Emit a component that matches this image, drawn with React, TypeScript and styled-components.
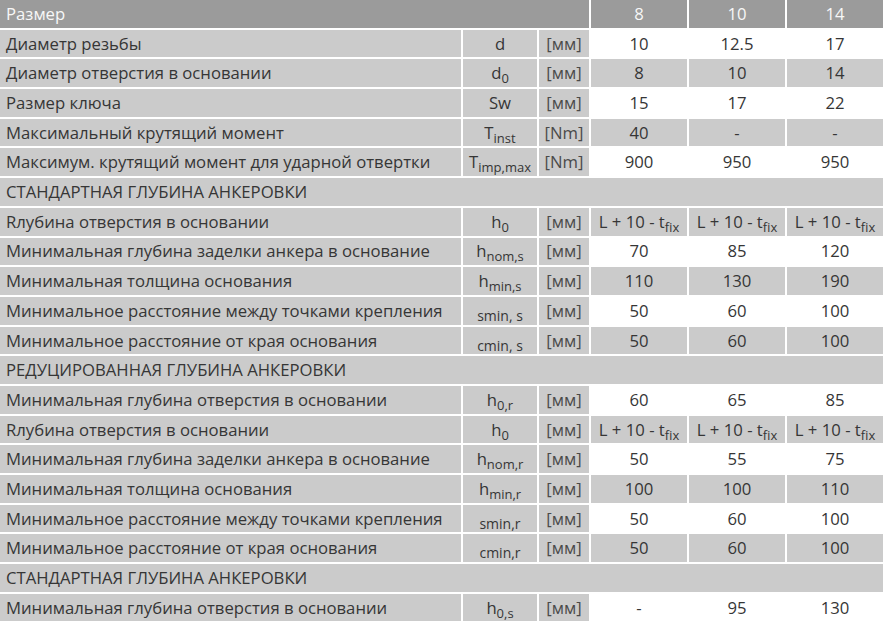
import React from 'react';
import styled, { createGlobalStyle } from 'styled-components';

const GlobalStyle = createGlobalStyle`
    html, body {
        margin: 0;
        padding: 0;
        background: #ffffff;
    }
    body {
        font-family: "Open Sans", "Liberation Sans", sans-serif;
        color: #363636;
    }
    td, th {
        box-sizing: border-box;
    }
`

const Table = styled.table`
    border-collapse: separate;
    border-spacing: 2px;
    margin: -2px 0 0 -2px;
    table-layout: fixed;
    width: 887px;
    font-size: 16.7px;
`

const HeadCell = styled.th<{ $left?: boolean }>`
    background: #9b9b9b;
    color: #f7f7f7;
    font-weight: 400;
    height: 27.7px;
    padding: 1px 6px 0;
    text-align: ${p => (p.$left ? 'left' : 'center')};
    line-height: 1;
`

const Cell = styled.td<{ $light?: boolean; $align?: string }>`
    background: ${p => (p.$light ? '#ffffff' : '#cbcbcb')};
    height: 27.7px;
    padding: 1px 4px 0;
    text-align: ${p => p.$align || 'center'};
    white-space: nowrap;
    line-height: 1;
    overflow: hidden;
`

const LabelCell = styled(Cell)`
    padding-left: 6px;
`

const UnitCell = styled(Cell)`
    color: #4a4a4a;
    padding: 1px 0 0;
`

const SectionCell = styled.td`
    background: #cbcbcb;
    height: 27.7px;
    padding: 1px 6px 0;
    text-transform: uppercase;
    line-height: 1;
`

const Sub = styled.span<{ $size?: number }>`
    font-size: ${p => p.$size || 13}px;
    position: relative;
    top: 4px;
`

type Sym = { main: string; sub?: string; small?: boolean }

type Row =
    | { section: string }
    | { label: string; sym: Sym; unit: string; values: React.ReactNode[]; light: boolean }

const tfix = (
    <>
        L + 10 - t<Sub>fix</Sub>
    </>
)

const rows: Row[] = [
    { label: 'Диаметр резьбы', sym: { main: 'd' }, unit: '[мм]', values: ['10', '12.5', '17'], light: true },
    { label: 'Диаметр отверстия в основании', sym: { main: 'd', sub: '0' }, unit: '[мм]', values: ['8', '10', '14'], light: false },
    { label: 'Размер ключа', sym: { main: 'Sw' }, unit: '[мм]', values: ['15', '17', '22'], light: true },
    { label: 'Максимальный крутящий момент', sym: { main: 'T', sub: 'inst' }, unit: '[Nm]', values: ['40', '-', '-'], light: false },
    { label: 'Максимум. крутящий момент для ударной отвертки', sym: { main: 'T', sub: 'imp,max' }, unit: '[Nm]', values: ['900', '950', '950'], light: true },
    { section: 'Стандартная глубина анкеровки' },
    { label: 'Rлубина отверстия в основании', sym: { main: 'h', sub: '0' }, unit: '[мм]', values: [tfix, tfix, tfix], light: false },
    { label: 'Минимальная глубина заделки анкера в основание', sym: { main: 'h', sub: 'nom,s' }, unit: '[мм]', values: ['70', '85', '120'], light: true },
    { label: 'Минимальная толщина основания', sym: { main: 'h', sub: 'min,s' }, unit: '[мм]', values: ['110', '130', '190'], light: false },
    { label: 'Минимальное расстояние между точками крепления', sym: { main: 's', sub: 'min, s', small: true }, unit: '[мм]', values: ['50', '60', '100'], light: true },
    { label: 'Минимальное расстояние от края основания', sym: { main: 'c', sub: 'min, s', small: true }, unit: '[мм]', values: ['50', '60', '100'], light: false },
    { section: 'Редуцированная глубина анкеровки' },
    { label: 'Минимальная глубина отверстия в основании', sym: { main: 'h', sub: '0,r' }, unit: '[мм]', values: ['60', '65', '85'], light: true },
    { label: 'Rлубина отверстия в основании', sym: { main: 'h', sub: '0' }, unit: '[мм]', values: [tfix, tfix, tfix], light: false },
    { label: 'Минимальная глубина заделки анкера в основание', sym: { main: 'h', sub: 'nom,r' }, unit: '[мм]', values: ['50', '55', '75'], light: true },
    { label: 'Минимальная толщина основания', sym: { main: 'h', sub: 'min,r' }, unit: '[мм]', values: ['100', '100', '110'], light: false },
    { label: 'Минимальное расстояние между точками крепления', sym: { main: 's', sub: 'min,r', small: true }, unit: '[мм]', values: ['50', '60', '100'], light: true },
    { label: 'Минимальное расстояние от края основания', sym: { main: 'c', sub: 'min,r', small: true }, unit: '[мм]', values: ['50', '60', '100'], light: false },
    { section: 'Стандартная глубина анкеровки' },
    { label: 'Минимальная глубина отверстия в основании', sym: { main: 'h', sub: '0,s' }, unit: '[мм]', values: ['-', '95', '130'], light: true },
]

function Symbol({ sym }: { sym: Sym }) {
    if (sym.small) {
        return <Sub $size={14}>{sym.main}{sym.sub}</Sub>
    }
    return (
        <>
            {sym.main}
            {sym.sub && <Sub>{sym.sub}</Sub>}
        </>
    )
}

function App() {
    return (
        <>
            <GlobalStyle />
            <Table>
                <colgroup>
                    <col style={{ width: 461 }} />
                    <col style={{ width: 74 }} />
                    <col style={{ width: 50 }} />
                    <col style={{ width: 96 }} />
                    <col style={{ width: 96 }} />
                    <col style={{ width: 96 }} />
                </colgroup>
                <thead>
                    <tr>
                        <HeadCell colSpan={3} $left>Размер</HeadCell>
                        <HeadCell>8</HeadCell>
                        <HeadCell>10</HeadCell>
                        <HeadCell>14</HeadCell>
                    </tr>
                </thead>
                <tbody>
                    {rows.map((row, i) =>
                        'section' in row ? (
                            <tr key={i}>
                                <SectionCell colSpan={6}>{row.section}</SectionCell>
                            </tr>
                        ) : (
                            <tr key={i}>
                                <LabelCell $align="left">{row.label}</LabelCell>
                                <Cell><Symbol sym={row.sym} /></Cell>
                                <UnitCell>{row.unit}</UnitCell>
                                {row.values.map((v, j) => (
                                    <Cell key={j} $light={row.light}>{v}</Cell>
                                ))}
                            </tr>
                        )
                    )}
                </tbody>
            </Table>
        </>
    );
}

export default App;
